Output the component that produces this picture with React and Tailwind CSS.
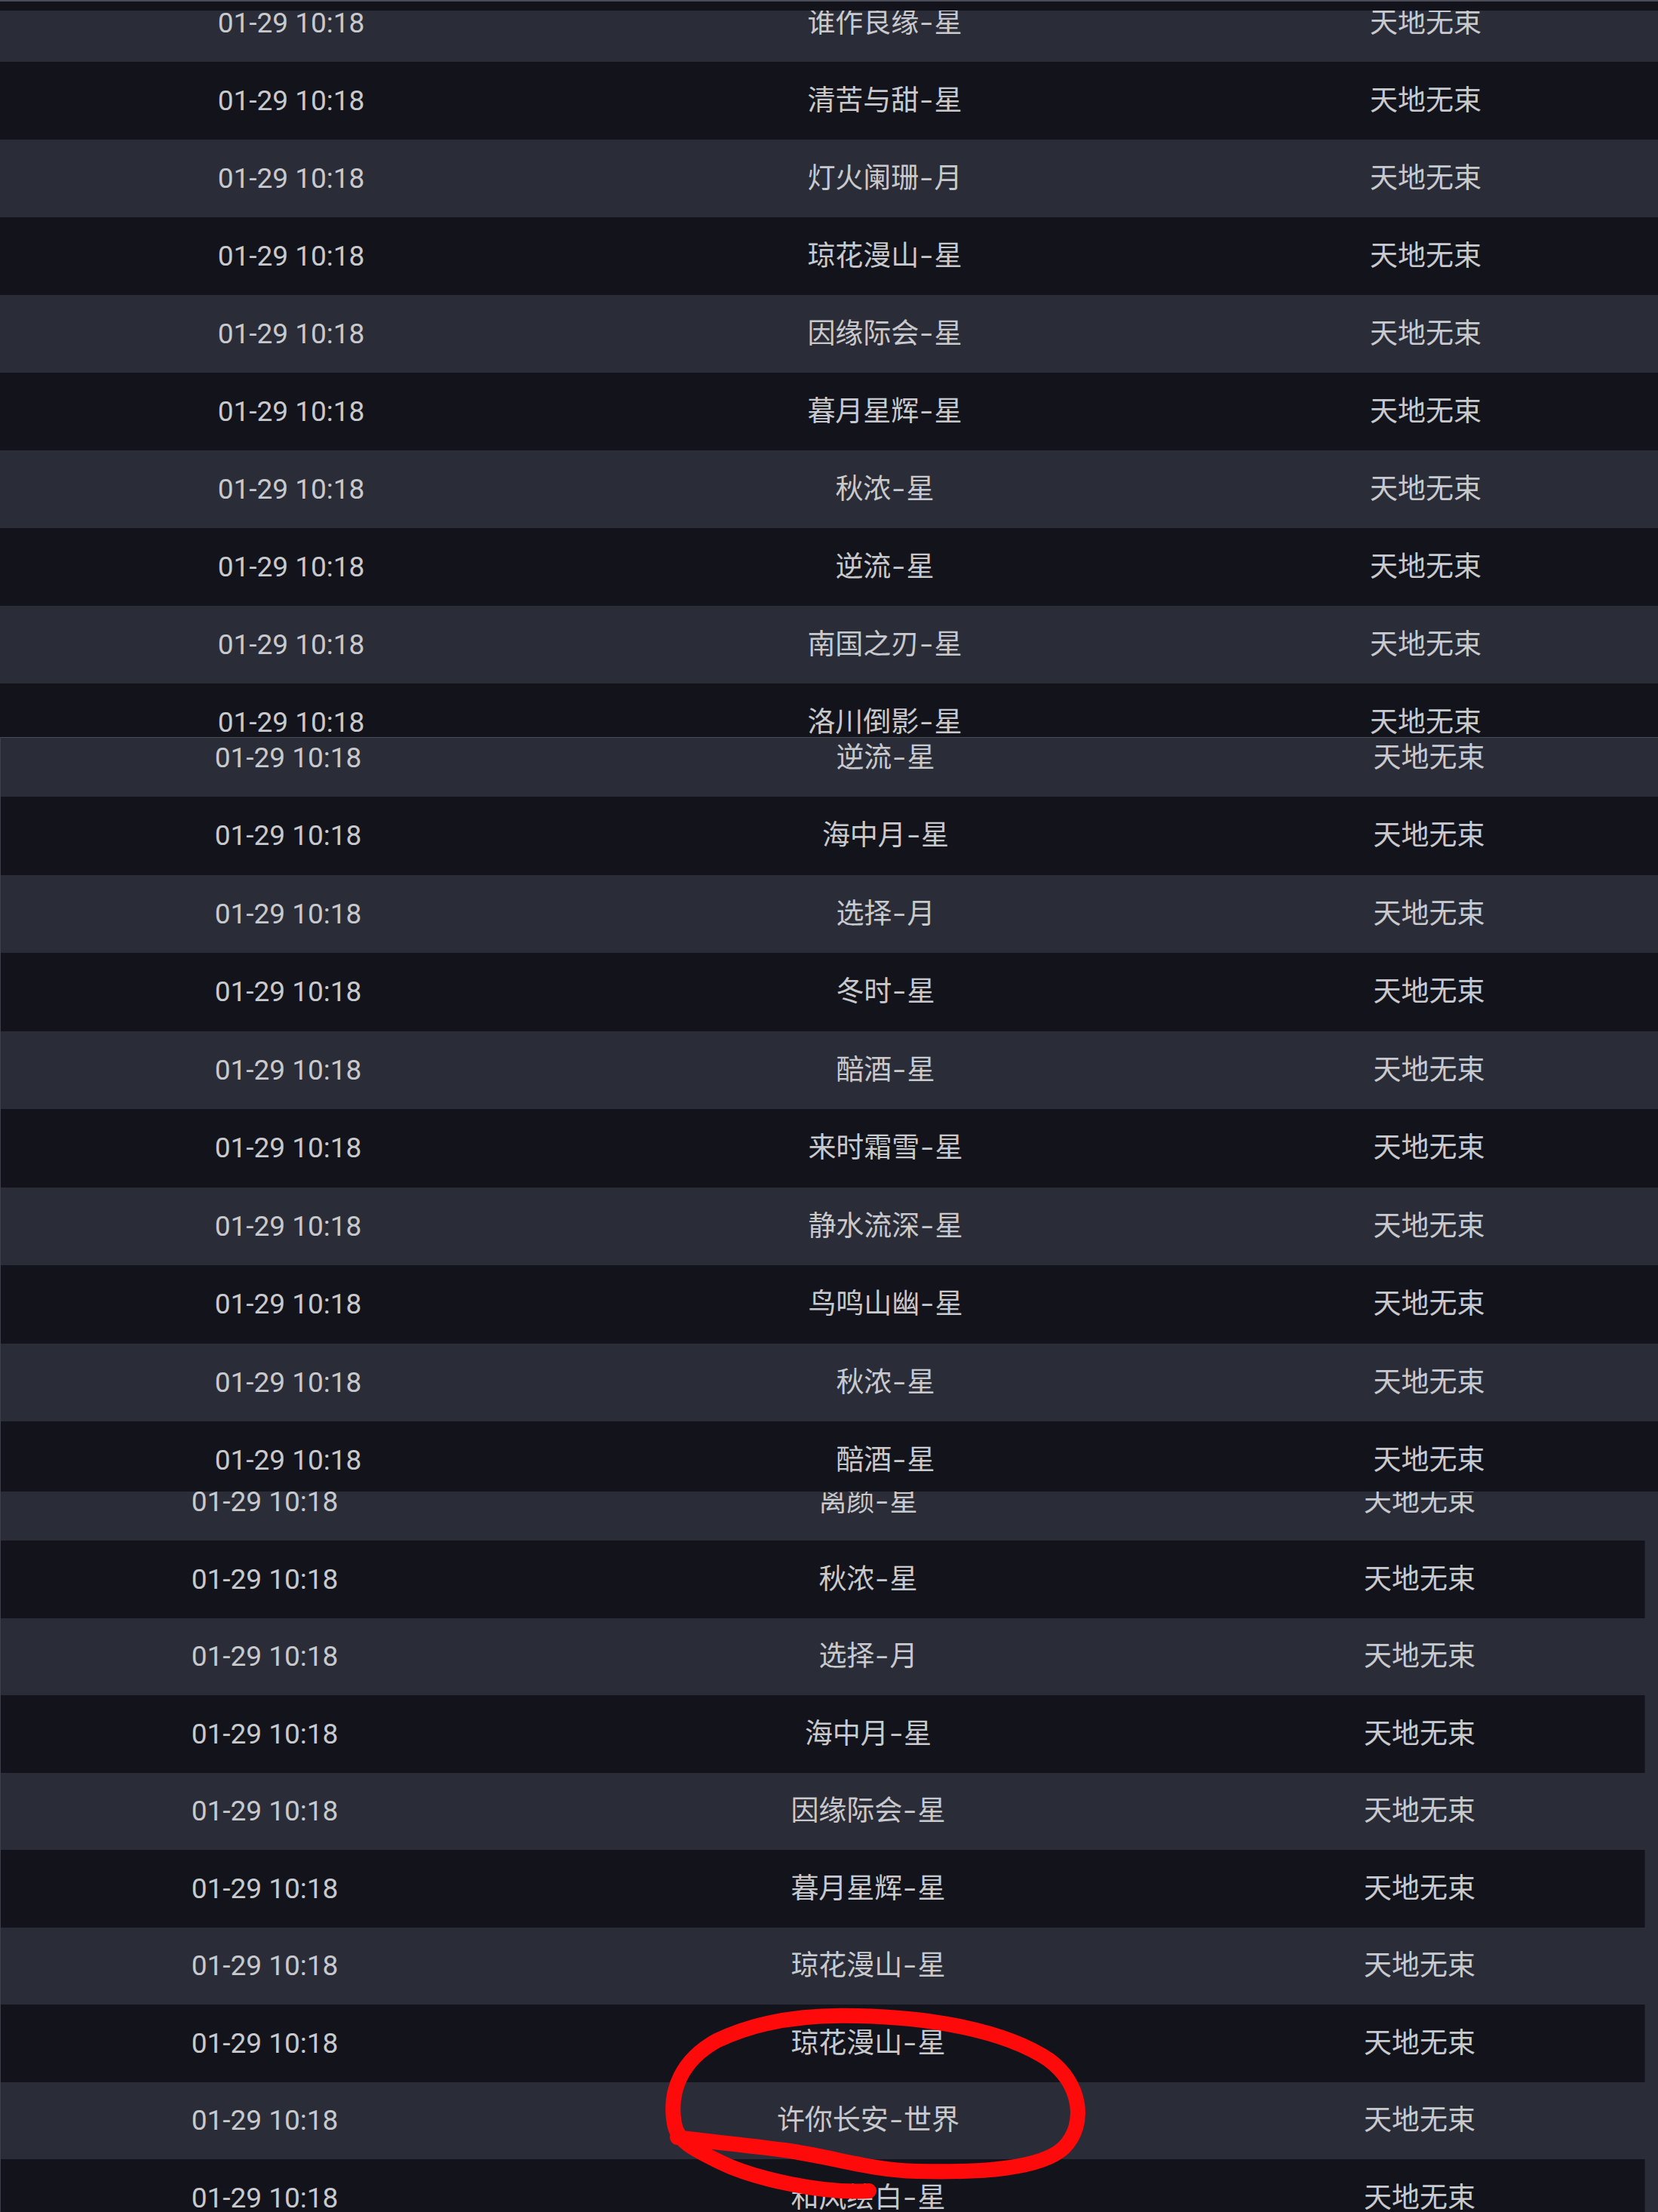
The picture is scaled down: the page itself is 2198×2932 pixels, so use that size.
import React from "react";

const LIGHT = "bg-[#2a2d38]";
const DARK = "bg-[#13141b]";

const seg1 = [
  "谁作良缘-星",
  "清苦与甜-星",
  "灯火阑珊-月",
  "琼花漫山-星",
  "因缘际会-星",
  "暮月星辉-星",
  "秋浓-星",
  "逆流-星",
  "南国之刃-星",
  "洛川倒影-星",
];

const seg2 = [
  "逆流-星",
  "海中月-星",
  "选择-月",
  "冬时-星",
  "醅酒-星",
  "来时霜雪-星",
  "静水流深-星",
  "鸟鸣山幽-星",
  "秋浓-星",
  "醅酒-星",
];

const seg3 = [
  "离颜-星",
  "秋浓-星",
  "选择-月",
  "海中月-星",
  "因缘际会-星",
  "暮月星辉-星",
  "琼花漫山-星",
  "琼花漫山-星",
  "许你长安-世界",
  "和风绘白-星",
];

function Name({ text }) {
  const [a, b] = text.split("-");
  return (
    <span>
      {a}
      <span className="mx-[5px] inline-block scale-x-[1.5]">-</span>
      {b}
    </span>
  );
}

// one table row; cutTop / cutBottom hide the part that the screenshot cut off
function Row({ name, light, h, cutTop = 0, cutBottom = 0, cols, extra = "" }) {
  return (
    <div
      className={`overflow-hidden ${light ? LIGHT : DARK} ${extra}`}
      style={{ height: h - cutTop - cutBottom }}
    >
      <div
        className={`grid items-center ${cols}`}
        style={{ height: h, marginTop: -cutTop }}
      >
        <div className="text-center">01-29 10:18</div>
        <div className="text-center">
          <Name text={name} />
        </div>
        <div className="text-center">天地无束</div>
      </div>
    </div>
  );
}

function Segment1() {
  const cols = "grid-cols-[772px_802px_1fr] [&>div:last-child]:pl-2";
  return (
    <div className="h-[977px] overflow-hidden">
      <div className="h-[2px] bg-[#4b4d56]" />
      <div className={`h-[12px] ${DARK}`} />
      {seg1.map((n, i) => (
        <Row
          key={i}
          name={n}
          light={i % 2 === 0}
          h={103}
          cutTop={i === 0 ? 35 : 0}
          cutBottom={i === 9 ? 32 : 0}
          cols={cols}
        />
      ))}
    </div>
  );
}

function Segment2() {
  const cols = "grid-cols-[762px_822px_1fr] [&>div:last-child]:pl-[6px]";
  return (
    <div className="h-[1000px] overflow-hidden border-l border-[#3d404b]">
      <div className="h-px bg-[#4a4d58]" />
      {seg2.map((n, i) => (
        <Row
          key={i}
          name={n}
          light={i % 2 === 0}
          h={103.5}
          cutTop={i === 0 ? 25.5 : 0}
          cutBottom={i === 9 ? 10.5 : 0}
          cols={cols}
        />
      ))}
    </div>
  );
}

function Segment3() {
  const cols = "grid-cols-[700px_900px_580px] [&>div:last-child]:pr-[18px]";
  return (
    <div className={`h-[955px] overflow-hidden border-l border-[#3d404b] ${LIGHT}`}>
      {seg3.map((n, i) => (
        <Row
          key={i}
          name={n}
          light={i % 2 === 0}
          h={102.5}
          cutTop={i === 0 ? 37.5 : 0}
          cutBottom={i === 9 ? 32.5 : 0}
          cols={cols}
          extra={i % 2 === 0 ? "" : "w-[2180px] border-r border-[#1d1f28]"}
        />
      ))}
    </div>
  );
}

export default function App() {
  return (
    <div
      className="relative w-[2198px] h-[2932px] overflow-hidden bg-[#13141b] text-[37px] leading-none text-[#c8c9cd]"
      style={{ fontFamily: '"Roboto", "Noto Sans CJK SC", sans-serif' }}
    >
      <Segment1 />
      <Segment2 />
      <Segment3 />

      {/* red hand-drawn mark */}
      <svg
        className="absolute left-0 top-0 pointer-events-none"
        width="2198"
        height="2932"
        viewBox="0 0 2198 2932"
      >
        <path
          d="M1152,2904 C1090,2908 1000,2888 955,2866 C925,2851 898,2840 894,2815 C886,2770 905,2730 950,2705 C1010,2676 1080,2670 1137,2672 C1230,2674 1330,2690 1390,2730 C1432,2760 1442,2815 1410,2847 C1380,2875 1300,2880 1216,2878 C1150,2876 1110,2860 1040,2850 C980,2842 930,2838 898,2833"
          fill="none"
          stroke="#ff0a0a"
          strokeWidth="20"
          strokeLinecap="round"
          strokeLinejoin="round"
        />
      </svg>
    </div>
  );
}
